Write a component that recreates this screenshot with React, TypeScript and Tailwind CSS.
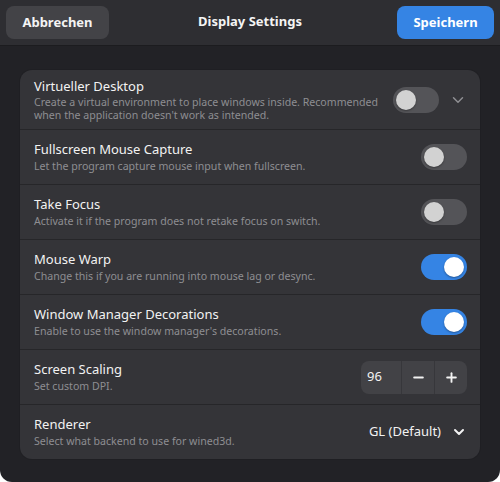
import { ChevronDown, Minus, Plus } from "lucide-react";

type Row = {
  title: string;
  subtitle: string[];
  control: "switch-off" | "switch-on" | "expander" | "spin" | "combo";
};

const rows: Row[] = [
  {
    title: "Virtueller Desktop",
    subtitle: [
      "Create a virtual environment to place windows inside. Recommended",
      "when the application doesn't work as intended.",
    ],
    control: "expander",
  },
  {
    title: "Fullscreen Mouse Capture",
    subtitle: ["Let the program capture mouse input when fullscreen."],
    control: "switch-off",
  },
  {
    title: "Take Focus",
    subtitle: ["Activate it if the program does not retake focus on switch."],
    control: "switch-off",
  },
  {
    title: "Mouse Warp",
    subtitle: ["Change this if you are running into mouse lag or desync."],
    control: "switch-on",
  },
  {
    title: "Window Manager Decorations",
    subtitle: ["Enable to use the window manager's decorations."],
    control: "switch-on",
  },
  {
    title: "Screen Scaling",
    subtitle: ["Set custom DPI."],
    control: "spin",
  },
  {
    title: "Renderer",
    subtitle: ["Select what backend to use for wined3d."],
    control: "combo",
  },
];

function Switch({ on }: { on: boolean }) {
  return (
    <div
      className={`flex h-[26px] w-[46px] items-center rounded-full p-[3px] ${
        on ? "justify-end bg-[#3584e4]" : "justify-start bg-[#545458]"
      }`}
    >
      <div
        className={`h-[20px] w-[20px] rounded-full shadow-[0_1px_2px_rgba(0,0,0,0.35)] ${
          on ? "bg-white" : "bg-[#d2d2d2]"
        }`}
      />
    </div>
  );
}

function Control({ kind }: { kind: Row["control"] }) {
  if (kind === "switch-off") return <Switch on={false} />;
  if (kind === "switch-on") return <Switch on />;
  if (kind === "expander")
    return (
      <div className="flex items-center gap-[10px]">
        <Switch on={false} />
        <ChevronDown className="h-[18px] w-[18px] text-[#8e8e92]" strokeWidth={2} />
      </div>
    );
  if (kind === "spin")
    return (
      <div className="flex h-[33px] w-[106px] items-center rounded-[8px] bg-[#424246] text-[13px] text-[#f2f2f2]">
        <div className="flex h-full w-[40px] items-center pl-[6px]">96</div>
        <div className="flex h-full w-[33px] items-center justify-center border-l border-[#37373b]">
          <Minus className="h-[15px] w-[15px]" strokeWidth={3} />
        </div>
        <div className="flex h-full w-[33px] items-center justify-center border-l border-[#37373b]">
          <Plus className="h-[15px] w-[15px]" strokeWidth={3} />
        </div>
      </div>
    );
  return (
    <div className="flex items-center gap-[10px] text-[13px] text-[#f2f2f2]">
      <span>GL (Default)</span>
      <ChevronDown className="h-[16px] w-[16px]" strokeWidth={3} />
    </div>
  );
}

export default function App() {
  return (
    <div className="h-[482px] w-[500px] bg-white">
      <div
        className="flex h-full w-full flex-col overflow-hidden rounded-b-[12px] bg-[#222226]"
        style={{ fontFamily: '"Noto Sans", "Open Sans", sans-serif' }}
      >
        {/* Header bar */}
        <div className="relative flex h-[46px] shrink-0 items-center justify-between border-b border-[#1c1c1f] bg-[#2e2e32] px-[6px]">
          <button className="h-[33px] w-[103px] rounded-[8px] bg-[#434347] text-[13px] font-bold text-[#f4f4f4]">
            Abbrechen
          </button>
          <div className="absolute left-1/2 top-[12px] -translate-x-1/2 text-[13px] font-bold text-[#f4f4f4]">
            Display Settings
          </div>
          <button className="h-[33px] w-[97px] rounded-[8px] bg-[#3584e4] text-[13px] font-bold text-white">
            Speichern
          </button>
        </div>

        {/* Content */}
        <div className="px-[20px] pt-[24px]">
          <div className="overflow-hidden rounded-[12px] bg-[#343438] shadow-[0_0_0_1px_rgba(0,0,0,0.08)]">
            {rows.map((row, i) => {
              const multi = row.subtitle.length > 1;
              return (
                <div
                  key={row.title}
                  className={`flex items-center justify-between gap-[12px] pl-[14px] pr-[13px] ${
                    multi ? "h-[59px]" : "h-[55px]"
                  } ${i > 0 ? "border-t border-[#262629]" : ""}`}
                >
                  <div className="flex flex-col">
                    <div className="text-[13px] leading-[19px] text-[#f2f2f2]">{row.title}</div>
                    {row.subtitle.map((s) => (
                      <div
                        key={s}
                        className={`whitespace-nowrap text-[10.6px] text-[#8e8e92] ${
                          multi ? "leading-[13px]" : "leading-[15px]"
                        }`}
                      >
                        {s}
                      </div>
                    ))}
                  </div>
                  <Control kind={row.control} />
                </div>
              );
            })}
          </div>
        </div>
      </div>
    </div>
  );
}
